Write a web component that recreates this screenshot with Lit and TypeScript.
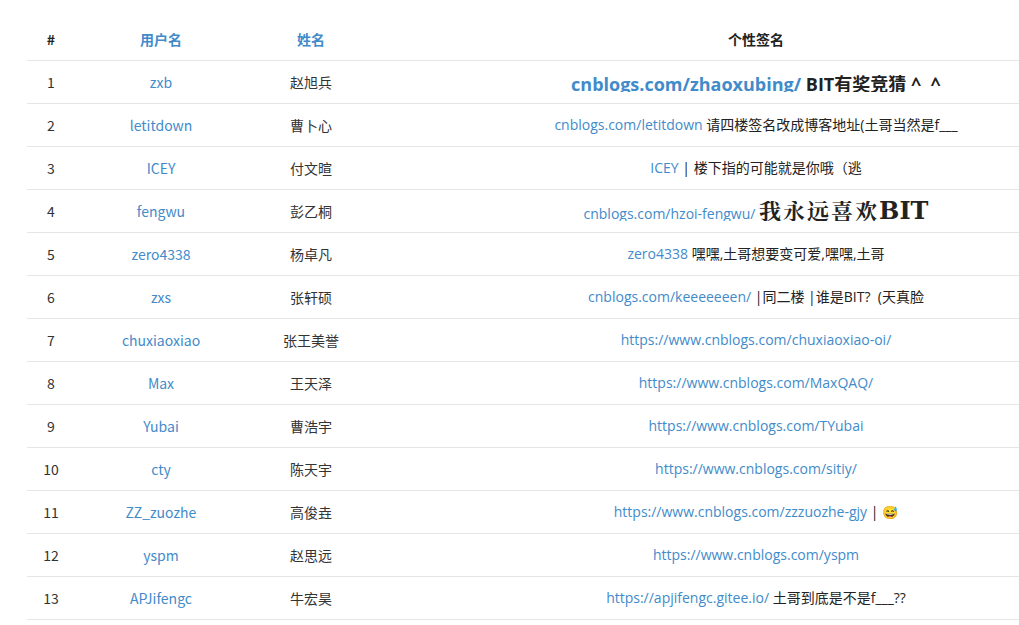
import { LitElement, html, css } from "lit";
import { customElement } from "lit/decorators.js";

const rows: [string, string, unknown][] = [
  ["zxb", "赵旭兵", html`<span class="big"><a>cnblogs.com/zhaoxubing/</a> BIT有奖竞猜 ^&nbsp;&nbsp;^</span>`],
  ["letitdown", "曹卜心", html`<a>cnblogs.com/letitdown</a> 请四楼签名改成博客地址(土哥当然是f___`],
  ["ICEY", "付文暄", html`<a>ICEY</a> | 楼下指的可能就是你哦（逃`],
  ["fengwu", "彭乙桐", html`<a>cnblogs.com/hzoi-fengwu/</a> <span class="fancy">我永远喜欢<span class="latin">BIT</span></span>`],
  ["zero4338", "杨卓凡", html`<a>zero4338</a> 嘿嘿,土哥想要变可爱,嘿嘿,土哥`],
  ["zxs", "张轩硕", html`<a>cnblogs.com/keeeeeeen/</a> |同二楼 |谁是BIT?&nbsp;&nbsp;(天真脸`],
  ["chuxiaoxiao", "张王美誉", html`<a>https://www.cnblogs.com/chuxiaoxiao-oi/</a>`],
  ["Max", "王天泽", html`<a>https://www.cnblogs.com/MaxQAQ/</a>`],
  ["Yubai", "曹浩宇", html`<a>https://www.cnblogs.com/TYubai</a>`],
  ["cty", "陈天宇", html`<a>https://www.cnblogs.com/sitiy/</a>`],
  ["ZZ_zuozhe", "高俊垚", html`<a>https://www.cnblogs.com/zzzuozhe-gjy</a> | <span class="emoji">😅</span>`],
  ["yspm", "赵思远", html`<a>https://www.cnblogs.com/yspm</a>`],
  ["APJifengc", "牛宏昊", html`<a>https://apjifengc.gitee.io/</a> 土哥到底是不是f___??`],
];

@customElement("app-root")
export class AppRoot extends LitElement {
  static styles = css`
    :host {
      display: block;
      height: 625px;
      overflow: hidden;
      padding: 18px 0 0 27px;
      box-sizing: border-box;
      background: #fff;
      font-family: "Noto Sans CJK SC", "Open Sans", sans-serif;
      font-size: 14px;
      line-height: 20px;
      color: #333;
    }
    table {
      border-collapse: collapse;
      table-layout: fixed;
      width: 1110px;
    }
    col.c1 { width: 48px; }
    col.c2 { width: 172px; }
    col.c3 { width: 128px; }
    th, td {
      padding: 11px 8px;
      text-align: center;
      border-bottom: 1px solid #e6e6e6;
      height: 20px;
    }
    th { font-weight: 700; color: #222; }
    th.link, a { color: #428bca; }
    td.sig { color: #222; font-family: "Open Sans", "Noto Sans CJK SC", sans-serif; }
    .clip { height: 20px; overflow: hidden; white-space: nowrap; }
    .big { font-size: 18px; font-weight: 700; line-height: 25px; }
    .fancy {
      font-family: "DejaVu Serif", "Noto Serif CJK SC", serif;
      font-size: 22px;
      font-weight: 700;
      letter-spacing: 2px;
      line-height: 19px;
    }
    .latin { font-size: 24px; letter-spacing: 0; line-height: 19px; }
    .emoji { font-size: 13px; font-family: "Noto Color Emoji", sans-serif; }
  `;

  render() {
    return html`<table>
      <colgroup><col class="c1" /><col class="c2" /><col class="c3" /><col /></colgroup>
      <thead><tr><th>#</th><th class="link">用户名</th><th class="link">姓名</th><th>个性签名</th></tr></thead>
      <tbody>
        ${rows.map(
          (r, i) => html`<tr>
            <td>${i + 1}</td>
            <td><a>${r[0]}</a></td>
            <td>${r[1]}</td>
            <td class="sig"><div class="clip">${r[2]}</div></td>
          </tr>`
        )}
      </tbody>
    </table>`;
  }
}
